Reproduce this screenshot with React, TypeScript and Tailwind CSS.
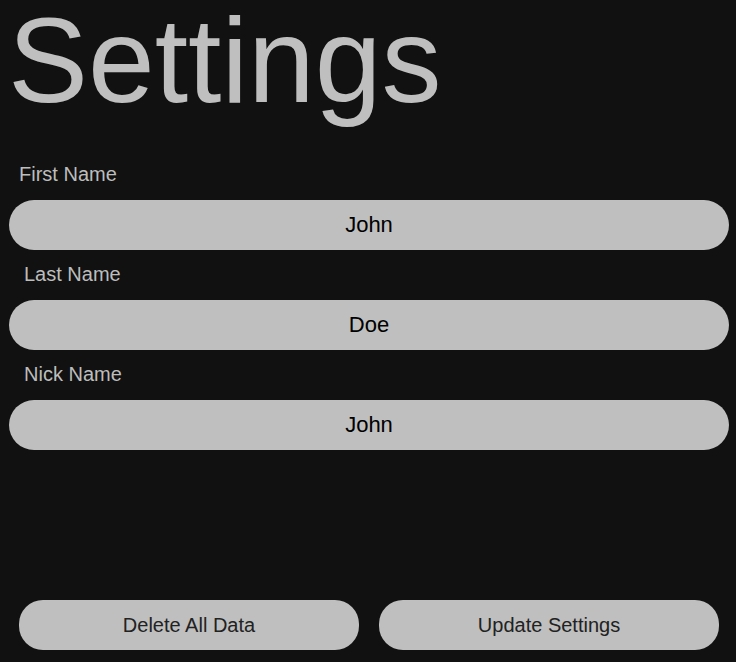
import React from 'react';

const fields = [
  { label: 'First Name', value: 'John', indent: 'ml-[19px]', top: 'mt-[43px]' },
  { label: 'Last Name', value: 'Doe', indent: 'ml-[24px]', top: 'mt-[13px]' },
  { label: 'Nick Name', value: 'John', indent: 'ml-[24px]', top: 'mt-[13px]' },
];

export default function App() {
  return (
    <div className="h-screen bg-[#111111] flex flex-col font-['Liberation_Sans',Arial,sans-serif]">
      {/* Title */}
      <h1 className="text-[120px] leading-none text-[#bfbfbf] pl-[8px] m-0 font-normal">Settings</h1>

      {/* Fields */}
      {fields.map((f) => (
        <div key={f.label} className="flex flex-col">
          <label className={`${f.top} ${f.indent} text-[20px] leading-[23px] text-[#bdbdbd]`}>{f.label}</label>
          <input
            readOnly
            defaultValue={f.value}
            className="mt-[14px] ml-[9px] w-[720px] h-[50px] rounded-full bg-[#bfbfbf] text-center text-[22px] text-black outline-none border-0"
          />
        </div>
      ))}

      {/* Actions */}
      <div className="mt-auto flex gap-[20px] pl-[19px] pb-[12px]">
        <button className="w-[340px] h-[50px] rounded-3xl bg-[#bfbfbf] text-[20px] text-[#222222]">Delete All Data</button>
        <button className="w-[340px] h-[50px] rounded-3xl bg-[#bfbfbf] text-[20px] text-[#222222]">Update Settings</button>
      </div>
    </div>
  );
}
